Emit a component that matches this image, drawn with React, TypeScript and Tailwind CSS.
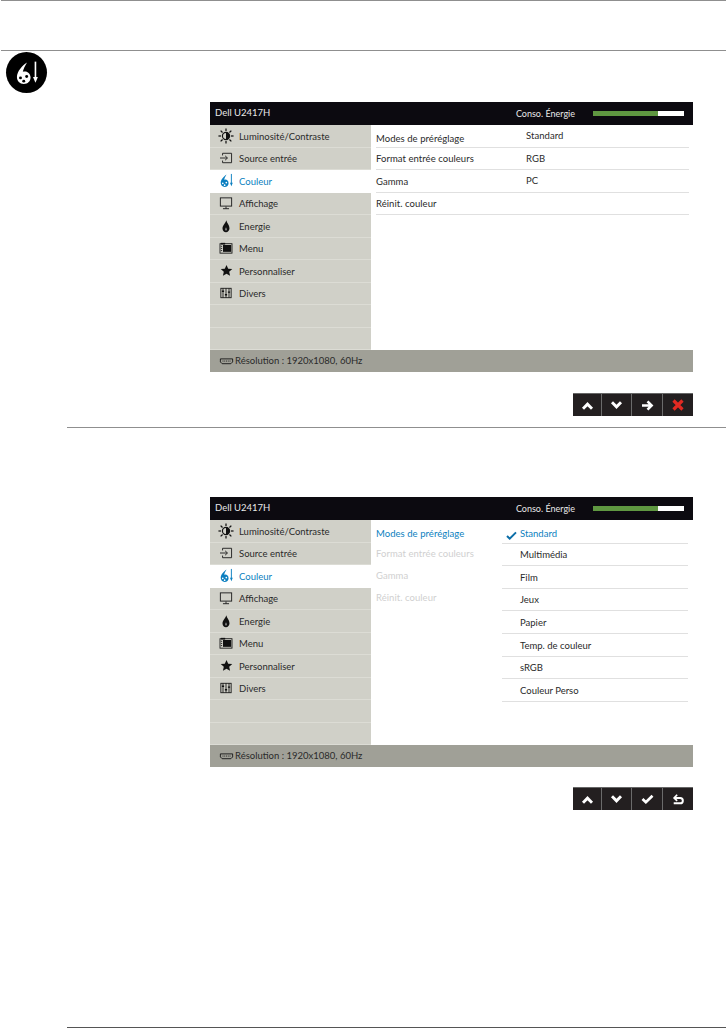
import React from "react";

const font = { fontFamily: "Lato, 'Noto Sans', sans-serif" };

function Palette({ color, className }: { color: string; className?: string }) {
  const hole = color === "#fff" ? "#000" : "#fff";
  return (
    <svg viewBox="0 0 16 16" className={className}>
      <path d="M8 1.500C5 3.500 1.800 7 1.800 10.500c0 2.500 1.800 4.300 4.200 4.300 2.500 0 4.200-1.800 4.200-4 0-2.300-1.700-3.800-3.400-3.800-.6 0-1 .1-1.400.3C5.800 5.500 6.800 3.500 8 1.500z" fill={color} />
      <circle cx="4" cy="11" r=".9" fill={hole} />
      <circle cx="7.800" cy="10.200" r=".9" fill={hole} />
      <circle cx="6" cy="13" r=".9" fill={hole} />
      <path d="M13.200 1v10" stroke={color} strokeWidth="1" />
      <path d="M11.700 10.500h3l-1.500 3.500z" fill={color} />
    </svg>
  );
}

function Sun() {
  const rays = [0, 45, 90, 135, 180, 225, 270, 315];
  return (
    <svg viewBox="0 0 18 18" className="w-[16px] h-[16px]">
      {rays.map((r) => (
        <path key={r} d="M9 .5v3" stroke="#111" strokeWidth="1.400" transform={`rotate(${r} 9 9)`} />
      ))}
      <circle cx="9" cy="9" r="4" fill="#d0d0c8" stroke="#111" strokeWidth="1.300" />
      <path d="M9 5a4 4 0 0 1 0 8z" fill="#111" />
    </svg>
  );
}
function Source() {
  return (
    <svg viewBox="0 0 16 14" className="w-[14px] h-[12px]" fill="none" stroke="#222" strokeWidth="1.100">
      <path d="M4 4V1.500h10.500v11H4V10" />
      <path d="M1 7h8.500M7 4.500 9.700 7 7 9.500" />
    </svg>
  );
}
function Monitor() {
  return (
    <svg viewBox="0 0 16 15" className="w-[14px] h-[13px]" fill="none" stroke="#222" strokeWidth="1.100">
      <rect x="1.500" y="1" width="13" height="9.500" />
      <path d="M8 11v2.500M4.500 13.500h7" />
    </svg>
  );
}
function Flame() {
  return (
    <svg viewBox="0 0 16 16" className="w-[14px] h-[14px]">
      <path d="M8.400 1.500C8.800 4.500 12 6.800 12 10.500c0 2.600-1.900 4.500-4 4.500s-4-1.700-4-4.200C4 7 7.600 5 8.400 1.500z" fill="#111" />
      <path d="M8 9c.3 1.200 1.200 1.700 1.200 2.900 0 .8-.5 1.300-1.200 1.300s-1.200-.5-1.200-1.300C6.800 10.700 7.700 10.200 8 9z" fill="#777" />
    </svg>
  );
}
function MenuIcon() {
  return (
    <svg viewBox="0 0 16 14" className="w-[14px] h-[12px]">
      <rect x="1" y="2" width="14" height="11" fill="none" stroke="#111" strokeWidth="1" />
      <rect x="4.500" y="3.500" width="9.500" height="8" fill="#111" />
      <rect x="2" y="1" width="5" height="2" fill="#111" />
      <path d="M2 5h1.500M2 7.500h1.500M2 10h1.500" stroke="#111" />
    </svg>
  );
}
function Star() {
  return (
    <svg viewBox="0 0 16 16" className="w-[13px] h-[13px]">
      <path d="M8 1.200l2.100 4.600 5 .5-3.800 3.300 1.100 5L8 12l-4.400 2.600 1.100-5L.9 6.300l5-.5z" fill="#111" />
    </svg>
  );
}
function Sliders() {
  return (
    <svg viewBox="0 0 14 14" className="w-[12px] h-[12px]" fill="none" stroke="#111">
      <rect x="1" y="1.500" width="12" height="11" />
      <path d="M3.500 1.500v11M7 1.500v11M10.500 1.500v11" />
      <path d="M2.200 5h2.600M5.700 9h2.600M9.200 6h2.600" strokeWidth="1.600" />
    </svg>
  );
}

const menu: [string, React.ReactNode][] = [
  ["Luminosité/Contraste", <Sun />],
  ["Source entrée", <Source />],
  ["Couleur", <Palette color="#0b7fc0" className="w-[15px] h-[15px]" />],
  ["Affichage", <Monitor />],
  ["Energie", <Flame />],
  ["Menu", <MenuIcon />],
  ["Personnaliser", <Star />],
  ["Divers", <Sliders />],
  ["", null],
  ["", null],
];

function Sidebar() {
  return (
    <div className="w-[161px] shrink-0 bg-[#d0d0c8] flex flex-col">
      {menu.map(([label, icon], i) => {
        const active = label === "Couleur";
        return (
          <div
            key={i}
            className={`h-[22.5px] flex items-center pl-[8px] text-[9.5px] leading-none border-b ${
              active ? "bg-white text-[#0b7fc0] border-white" : "text-[#2a2a2a] border-[#dcdcd5]"
            }`}
          >
            <span className="w-[16px] mr-[5px] flex justify-center shrink-0">{icon}</span>
            <span className="pt-[1px]">{label}</span>
          </div>
        );
      })}
    </div>
  );
}

function Monitorscreen({ children }: { children: React.ReactNode }) {
  return (
    <div className="w-[483px] h-[270px] flex flex-col" style={font}>
      <div className="h-[23px] bg-[#0c0a10] text-[#e8e8e8] text-[9.5px] flex items-center justify-between pl-[5px] pr-[9px] shrink-0">
        <span>Dell U2417H</span>
        <div className="flex items-center">
          <span className="text-[9px]">Conso. Énergie</span>
          <div className="ml-[18px] w-[91px] h-[5px] flex bg-white">
            <div className="w-[65px] bg-[#5f9741]" />
          </div>
        </div>
      </div>
      <div className="h-[225px] flex shrink-0">
        <Sidebar />
        <div className="flex-1 bg-white flex">{children}</div>
      </div>
      <div className="h-[22px] bg-[#a0a097] flex items-center pl-[9px] text-[9.5px] text-[#2a2a2a] shrink-0">
        <svg viewBox="0 0 16 8" className="w-[15px] h-[7px] mr-[1px]" fill="none" stroke="#111">
          <path d="M1 1h14v3.500l-2 2H3l-2-2z" />
          <path d="M3.500 3.500h9" strokeDasharray="1 1" />
        </svg>
        <span>Résolution : 1920x1080, 60Hz</span>
      </div>
    </div>
  );
}

const rows1: [string, string, string, string, string][] = [
  ["Modes de préréglage", "Standard", "h-[22px]", "pt-[5px]", ""],
  ["Format entrée couleurs", "RGB", "h-[22px]", "pt-[2px]", "pt-[2px]"],
  ["Gamma", "PC", "h-[23px]", "pt-[2px]", ""],
  ["Réinit. couleur", "", "h-[22px]", "pt-[2px]", ""],
];

function Panel1() {
  return (
    <div className="flex flex-col w-[313px] ml-[5px] mt-[1px]">
      {rows1.map(([a, b, h, pa, pb]) => (
        <div key={a} className={`${h} flex items-center border-b border-[#e0e0e0] text-[9.5px] text-[#2a2a2a] tracking-[0.05px]`}>
          <span className={`w-[150px] ${pa}`}>{a}</span>
          <span className={pb}>{b}</span>
        </div>
      ))}
    </div>
  );
}

const right = ["Standard", "Multimédia", "Film", "Jeux", "Papier", "Temp. de couleur", "sRGB", "Couleur Perso"];

function Panel2() {
  return (
    <div className="flex">
      <div className="w-[126px] ml-[5px] flex flex-col text-[9.5px] text-[#d0d0d0] tracking-[0.05px]">
        <div className="h-[24px] pt-[5px] flex items-center text-[#0b7fc0]">Modes de préréglage</div>
        <div className="h-[17px] mt-[2px] flex items-center">Format entrée couleurs</div>
        <div className="h-[22px] mt-[2px] flex items-center">Gamma</div>
        <div className="h-[22px] flex items-center">Réinit. couleur</div>
      </div>
      <div className="w-[186px] mt-[1px] flex flex-col text-[9.5px] text-[#2a2a2a]">
        {right.map((r, i) => (
          <div
            key={r}
            className={`${i === 0 ? "pt-[5px] text-[#0b7fc0]" : "pt-[2px]"} h-[22.600px] flex items-center pl-[18px] border-b border-[#e0e0e0] relative`}
          >
            {i === 0 && (
              <svg viewBox="0 0 12 10" className="w-[11px] h-[9px] absolute left-[4px] top-[10px]">
                <path d="M1 5.500 4 8.500 11 1.500" fill="none" stroke="#0b6ea8" strokeWidth="2.200" />
              </svg>
            )}
            {r}
          </div>
        ))}
      </div>
    </div>
  );
}

const Up = () => (
  <svg viewBox="0 0 14 10" className="w-[13px] h-[9px]"><path d="M2 8.500 7 3.500 12 8.500" fill="none" stroke="#fff" strokeWidth="3.200" /></svg>
);
const Down = () => (
  <svg viewBox="0 0 14 10" className="w-[13px] h-[9px]"><path d="M2 1.500 7 6.500 12 1.500" fill="none" stroke="#fff" strokeWidth="3.200" /></svg>
);
const Right = () => (
  <svg viewBox="0 0 14 12" className="w-[13px] h-[11px]"><path d="M1 6h10M7 1.500 11.500 6 7 10.500" fill="none" stroke="#fff" strokeWidth="2.800" /></svg>
);
const Close = () => (
  <svg viewBox="0 0 12 12" className="w-[12px] h-[12px]"><path d="M1.500 1.500l9 9M10.500 1.500l-9 9" fill="none" stroke="#e12a22" strokeWidth="3.200" /></svg>
);
const Check = () => (
  <svg viewBox="0 0 14 11" className="w-[13px] h-[10px]"><path d="M1.500 5.500 5.200 9 12.500 2" fill="none" stroke="#fff" strokeWidth="3" /></svg>
);
const Back = () => (
  <svg viewBox="0 0 14 12" className="w-[12px] h-[11px]" fill="none" stroke="#fff" strokeWidth="2.300">
    <path d="M3 4.200h6.500a3 3 0 0 1 0 6.300H2" />
    <path d="M6 .5 2.500 4.200 6 7.500" strokeWidth="2" />
  </svg>
);

function Buttons({ items }: { items: React.ReactNode[] }) {
  const widths = ["w-[29px]", "w-[30px]", "w-[31px]", "w-[30px]"];
  return (
    <div className="flex justify-end w-[483px]">
      <div className="flex h-[23px] border-t border-[#666]">
        {items.map((it, i) => (
          <div
            key={i}
            className={`${widths[i]} h-full bg-[#231f20] flex items-center justify-center ${i < 3 ? "border-r border-[#6b6b6b]" : ""}`}
          >
            {it}
          </div>
        ))}
      </div>
    </div>
  );
}

export default function App() {
  return (
    <div className="w-[726px] h-[1028px] bg-white overflow-hidden flex flex-col" style={font}>
      <div className="h-[51px] ml-[1px] border-t border-b border-[#8f8f8f] shrink-0" />
      <div className="flex flex-col flex-1">
        <div className="h-[376px] flex shrink-0">
          <div className="w-[41px] h-[41px] rounded-full bg-black flex items-center justify-center ml-[6px] mt-[1px] shrink-0">
            <Palette color="#fff" className="w-[26px] h-[26px]" />
          </div>
          <div className="ml-[163px] mt-[51px] flex flex-col">
            <Monitorscreen><Panel1 /></Monitorscreen>
            <div className="mt-[21px]">
              <Buttons items={[<Up />, <Down />, <Right />, <Close />]} />
            </div>
          </div>
        </div>
        <div className="ml-[67px] border-t border-[#8f8f8f] shrink-0" />
        <div className="ml-[210px] mt-[69px] flex flex-col shrink-0">
          <Monitorscreen><Panel2 /></Monitorscreen>
          <div className="mt-[20px]">
            <Buttons items={[<Up />, <Down />, <Check />, <Back />]} />
          </div>
        </div>
        <div className="ml-[67px] mt-[217px] border-t border-[#555] shrink-0" />
      </div>
    </div>
  );
}
